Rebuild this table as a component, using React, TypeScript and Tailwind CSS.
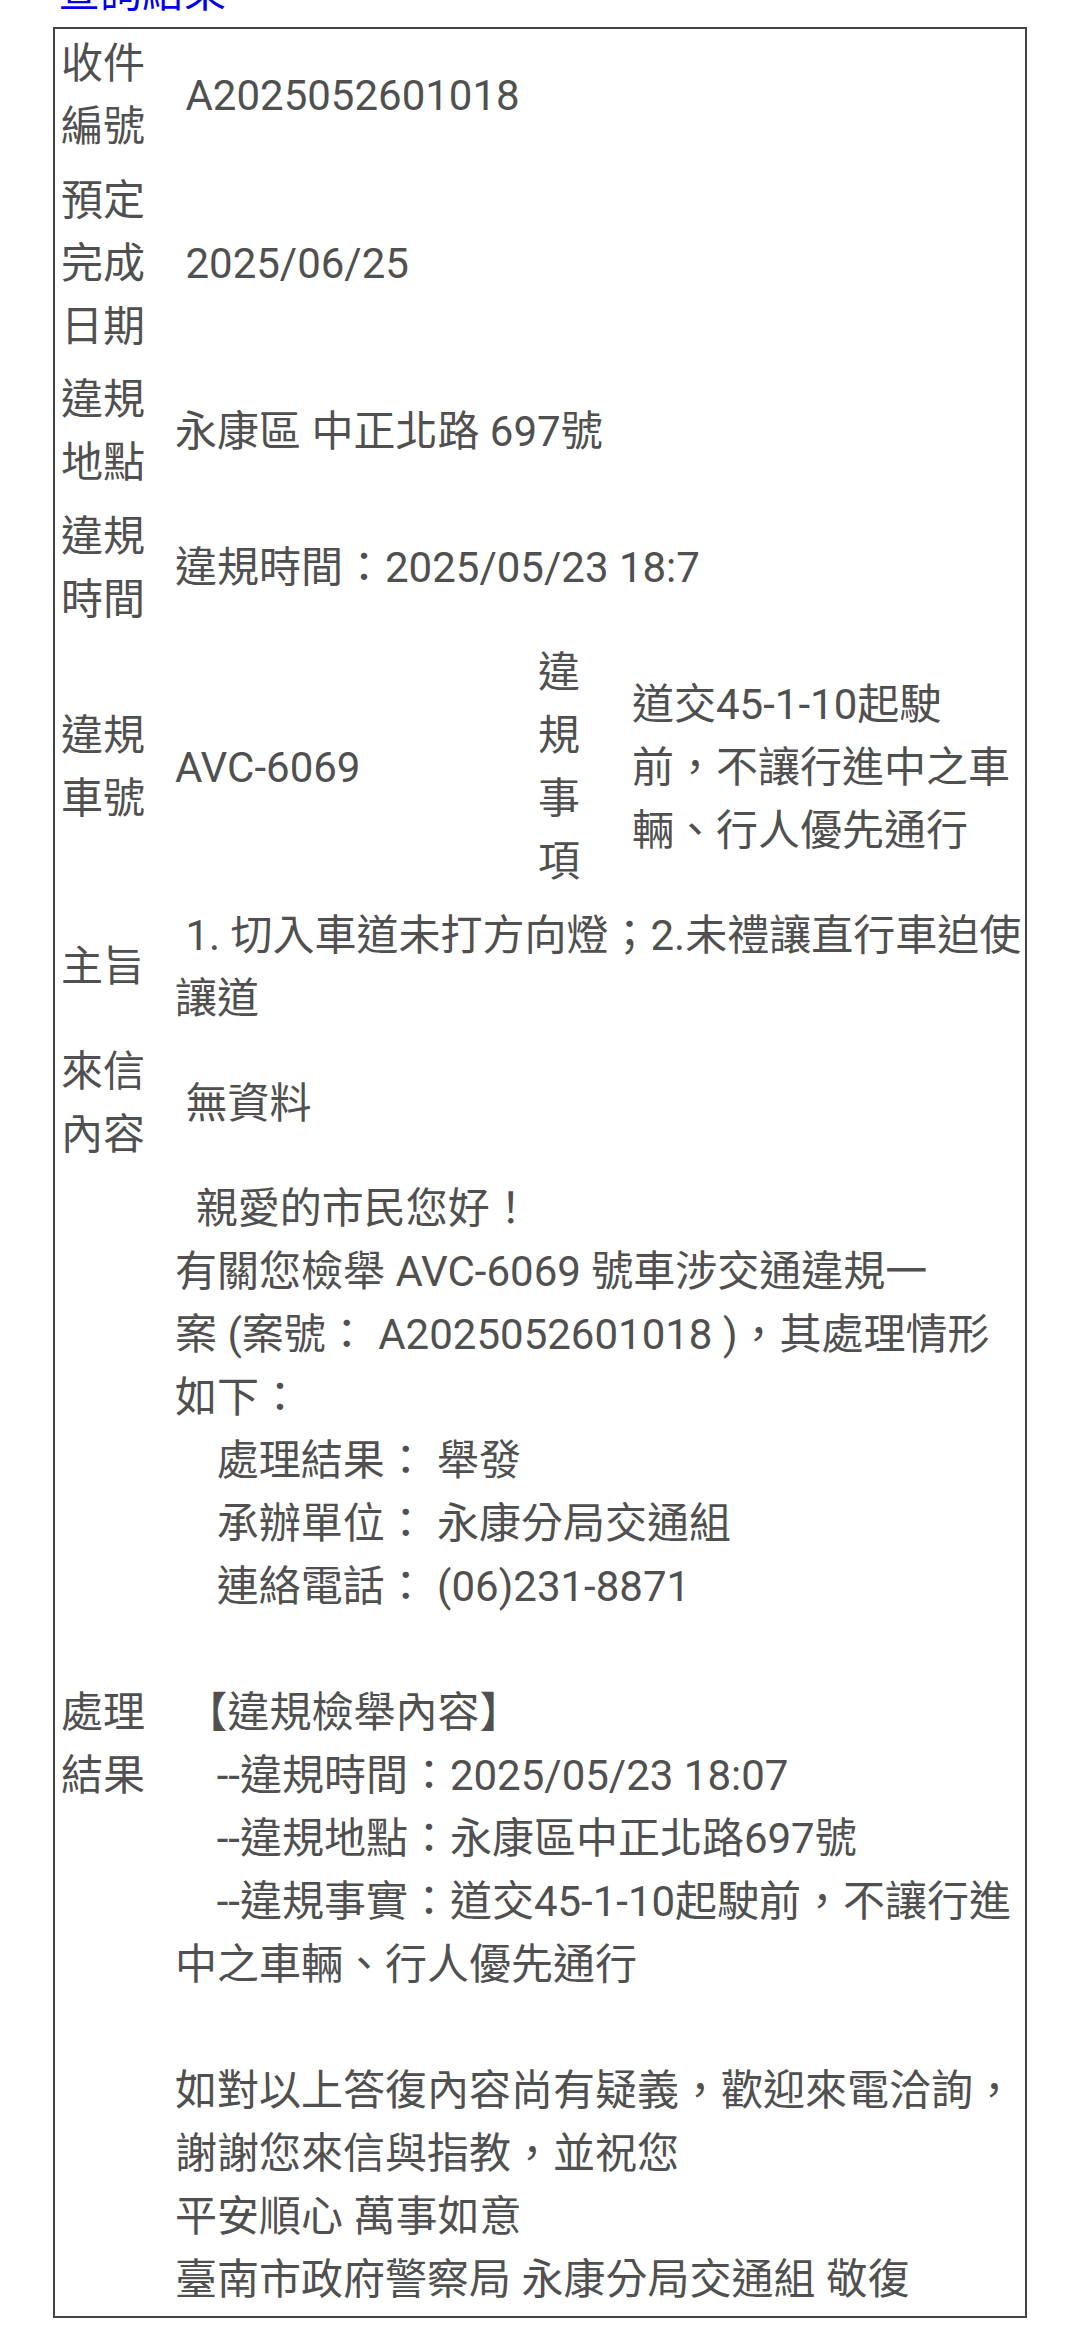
import type { ReactNode } from 'react';

const S = '\u00a0';

function Row({ label, children }: { label: string; children: ReactNode }) {
  return (
    <div className="flex items-center pl-[6px]">
      <div className="w-[86px] shrink-0">{label}</div>
      <div className="ml-[28px] flex-1">{children}</div>
    </div>
  );
}

const reply = [
  `${S}${S}親愛的市民您好！`,
  '有關您檢舉 AVC-6069 號車涉交通違規一',
  '案 (案號： A2025052601018 )，其處理情形',
  '如下：',
  `${S}${S}${S}${S}處理結果： 舉發`,
  `${S}${S}${S}${S}承辦單位： 永康分局交通組`,
  `${S}${S}${S}${S}連絡電話： (06)231-8871`,
  S,
  `${S}【違規檢舉內容】`,
  `${S}${S}${S}${S}--違規時間：2025/05/23 18:07`,
  `${S}${S}${S}${S}--違規地點：永康區中正北路697號`,
  `${S}${S}${S}${S}--違規事實：道交45-1-10起駛前，不讓行進`,
  '中之車輛、行人優先通行',
  S,
  '如對以上答復內容尚有疑義，歡迎來電洽詢，',
  '謝謝您來信與指教，並祝您',
  '平安順心 萬事如意',
  '臺南市政府警察局 永康分局交通組 敬復',
];

export default function App() {
  return (
    <div className="min-h-[2331px] bg-white font-['Roboto','Noto_Sans_CJK_TC',sans-serif] text-[42px] leading-[63px] text-[#505050]">
      <div className="-mt-[39px] pl-[58px] text-[#0000ee]">查詢結果</div>

      <div className="mx-[53px] mt-[3px] flex flex-col gap-[10.5px] border-2 border-[#444] pt-[3px] pb-[5px]">
        <Row label="收件編號">{`${S}A2025052601018`}</Row>
        <Row label="預定完成日期">{`${S}2025/06/25`}</Row>
        <Row label="違規地點">永康區 中正北路 697號</Row>
        <Row label="違規時間">違規時間：2025/05/23 18:7</Row>

        {/* plate + violation item share one row */}
        <div className="flex items-center pl-[6px]">
          <div className="w-[86px] shrink-0">違規車號</div>
          <div className="ml-[28px] w-[335px] shrink-0">AVC-6069</div>
          <div className="ml-[28px] w-[44px] shrink-0">違規事項</div>
          <div className="ml-[50px] w-[384px] shrink-0">
            <div>道交45-1-10起駛</div>
            <div>前，不讓行進中之車</div>
            <div>輛、行人優先通行</div>
          </div>
        </div>

        <Row label="主旨">
          <div>{`${S}1. 切入車道未打方向燈；2.未禮讓直行車迫使`}</div>
          <div>讓道</div>
        </Row>
        <Row label="來信內容">{`${S}無資料`}</Row>
        <Row label="處理結果">
          {reply.map((line, i) => (
            <div key={i} className="whitespace-nowrap">
              {line}
            </div>
          ))}
        </Row>
      </div>
    </div>
  );
}
